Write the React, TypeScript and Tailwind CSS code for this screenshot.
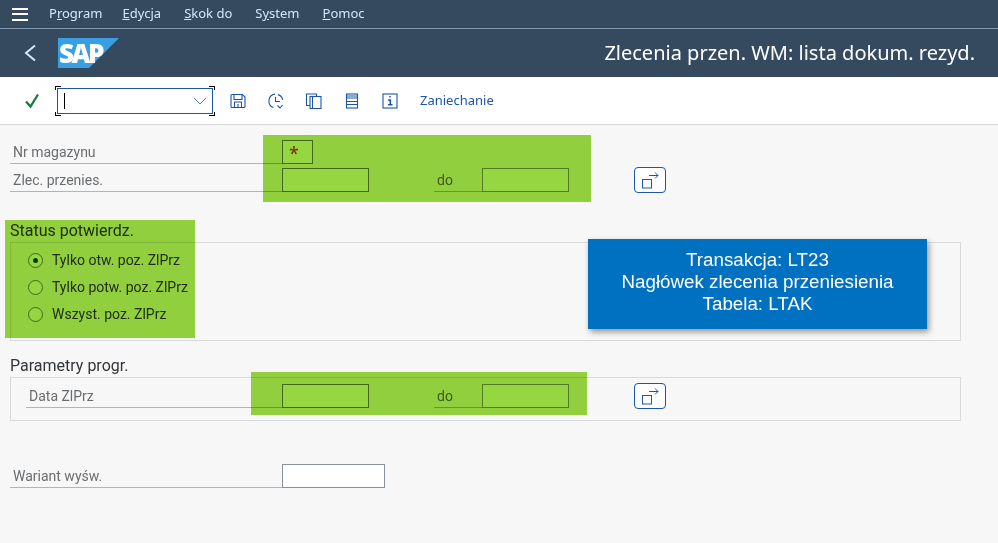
const sans = "font-['Noto_Sans',sans-serif]";
const form = "font-['Roboto',sans-serif]";

function Underlined({ first, rest, pre = "", className = "" }: { first: string; rest: string; pre?: string; className?: string }) {
  return (
    <span className={`text-[13px] text-[#d1e8ff] ${className}`}>
      {pre}
      <span className="underline">{first}</span>
      {rest}
    </span>
  );
}

function Input({ w = "w-[87px]", green, children }: { w?: string; green?: boolean; children?: React.ReactNode }) {
  return (
    <div className={`h-6 ${w} shrink-0 bg-white border ${green ? "border-[#6e7a80]" : "border-[#89919a]"} flex items-center pl-1.5`}>
      {children}
    </div>
  );
}

function Label({ text, w = "w-[272px]", pl = "pl-[3px]" }: { text: string; w?: string; pl?: string }) {
  return (
    <div className={`h-6 ${w} ${pl} shrink-0 border-b border-[#b4b4b4] text-[14px] leading-[24px] text-[#6a6d70] ${form}`}>{text}</div>
  );
}

function MultiButton() {
  return (
    <button className="ml-[65px] w-8 h-[26px] shrink-0 rounded-[4px] border border-[#1b56a5] bg-white flex items-center justify-center">
      <svg width="22" height="18" viewBox="0 0 22 18" fill="none" stroke="#1b56a5" strokeWidth="1">
        <rect x="3.500" y="8.500" width="9" height="8.500" />
        <path d="M10 4.500h9M16 1.500l3 3-3 3" />
      </svg>
    </button>
  );
}

function RangeTail() {
  return (
    <>
      <div className="ml-[65px]">
        <Label text="do" w="w-12" />
      </div>
      <Input />
      <MultiButton />
    </>
  );
}

function Radio({ text, on }: { text: string; on?: boolean }) {
  return (
    <div className="h-[27px] flex items-center pl-[17px] gap-[9px]">
      <span className="w-[15px] h-[15px] rounded-full border border-[#6a7d70] bg-white flex items-center justify-center">
        {on && <span className="w-[5px] h-[5px] rounded-full bg-[#0a4a50]" />}
      </span>
      <span className={`text-[14px] text-[#32363a] ${form}`}>{text}</span>
    </div>
  );
}

function Tool({ children }: { children: React.ReactNode }) {
  return <div className="w-[38px] flex justify-center">{children}</div>;
}

const ic = { width: 18, height: 18, viewBox: "0 0 18 18", fill: "none", stroke: "#1b56a5", strokeWidth: 1.1 };

export default function App() {
  return (
    <div className={`relative w-[998px] h-[543px] overflow-hidden bg-[#f7f7f7] ${sans}`}>
      {/* menu bar */}
      <div className="h-[29px] bg-[#354a5f] border-b border-[#7f93ab] flex items-center">
        <div className="w-[49px] pl-3">
          <div className="w-4 h-[13px] flex flex-col justify-between">
            <span className="h-0.5 bg-white" />
            <span className="h-0.5 bg-white" />
            <span className="h-0.5 bg-white" />
          </div>
        </div>
        <div className="flex items-center">
          <Underlined pre="P" first="r" rest="ogram" />
          <Underlined first="E" rest="dycja" className="ml-5" />
          <Underlined first="S" rest="kok do" className="ml-[23px]" />
          <Underlined pre="S" first="y" rest="stem" className="ml-[23px]" />
          <Underlined first="P" rest="omoc" className="ml-[23px]" />
        </div>
      </div>

      {/* title bar */}
      <div className="h-12 bg-[#354a5f] flex items-center pl-4 pr-[23px]">
        <svg width="30" height="30" viewBox="0 0 30 30" fill="none" stroke="#d1e8ff" strokeWidth="2">
          <path d="M19 7.500l-9 7.500 9 7.500" />
        </svg>
        <svg className="ml-3 overflow-visible" width="62" height="30" viewBox="0 0 62 30">
          <polygon points="0,0 61,0 31,30 0,30" fill="#38a0e2" />
          <text x="1" y="25" fontSize="26" fontWeight="800" fill="#fff" fontFamily="'Open Sans',sans-serif" letterSpacing="-2.5">SAP</text>
        </svg>
        <div className="ml-auto text-[20px] text-white">Zlecenia przen. WM: lista dokum. rezyd.</div>
      </div>

      {/* toolbar */}
      <div className="h-12 bg-white border-b border-[#d9d9d9] flex items-center pl-6">
        <svg width="16" height="16" viewBox="0 0 16 16" fill="none" stroke="#1e7b3a" strokeWidth="2.300">
          <path d="M2 8.500l4.500 5 7.500-12" />
        </svg>
        <div className="relative ml-[17px] w-[156px] h-[26px] border border-[#1b56a5] bg-white flex items-center justify-between pl-1.5 pr-[5px]">
          <span className="w-px h-4 bg-black" />
          <svg width="14" height="8" viewBox="0 0 14 8" fill="none" stroke="#4f7fc0" strokeWidth="1">
            <path d="M1 1l6 6 6-6" />
          </svg>
          <span className="absolute -left-[3px] -top-[3px] w-[6px] h-1 border-l border-t border-black" />
          <span className="absolute -right-[3px] -top-[3px] w-[6px] h-1 border-r border-t border-black" />
          <span className="absolute -left-[3px] -bottom-[3px] w-[6px] h-1 border-l border-b border-black" />
          <span className="absolute -right-[3px] -bottom-[3px] w-[6px] h-1 border-r border-b border-black" />
        </div>
        <div className="ml-1.5 flex items-center">
          <Tool>
            <svg {...ic}>
              <path d="M2 3.500q0-1 1-1h10.500l2.500 2.500v9.500q0 1-1 1h-12q-1 0-1-1z" />
              <path d="M5 2.500v5h8v-5M5.500 15.500v-5.500h7v5.500M9 12v3.500" />
            </svg>
          </Tool>
          <Tool>
            <svg {...ic}>
              <path d="M8 2.100a7 7 0 0 0-1.500 13.500" />
              <path d="M11 2.600a7 7 0 0 1 4.800 5.200M8.500 5v4.500h4.500M10.500 13.500l2.500 2.500 2.500-3" />
            </svg>
          </Tool>
          <Tool>
            <svg {...ic}>
              <path d="M11.500 4.500v-2.500h-10v11.500h3.500" />
              <rect x="5" y="4.500" width="11" height="12" />
              <path d="M7.500 4.500v12" />
            </svg>
          </Tool>
          <Tool>
            <svg {...ic}>
              <rect x="3.500" y="2" width="11" height="14" />
              <path d="M3.500 4h11M3.500 6h11M3.500 9.500h11M3.500 12.500h11" />
            </svg>
          </Tool>
          <Tool>
            <svg {...ic}>
              <rect x="2" y="2" width="14" height="14" />
              <path d="M7 8h2.300v4.500M7 12.800h4.500M8.300 4.800h1.500" strokeWidth="1.600" />
            </svg>
          </Tool>
        </div>
        <span className="ml-[11px] pt-px text-[13px] text-[#1b56a5]">Zaniechanie</span>
      </div>

      {/* form */}
      <div className="pt-[15px] pl-2.5">
        <div className="flex items-center">
          <Label text="Nr magazynu" />
          <Input w="w-[31px]" green>
            <span className="text-[18px] leading-none pt-0.5 text-[#c03000]">*</span>
          </Input>
        </div>
        <div className="flex items-center mt-[3px]">
          <Label text="Zlec. przenies." />
          <Input green />
          <RangeTail />
        </div>

        <div className="mt-[29px]">
          <div className={`h-5 text-[16px] leading-[18px] text-[#32363a] ${form}`}>Status potwierdz.</div>
          <div className="w-[951px] h-[99px] border border-[#d9d9d9] pt-1">
            <Radio text="Tylko otw. poz. ZlPrz" on />
            <Radio text="Tylko potw. poz. ZlPrz" />
            <Radio text="Wszyst. poz. ZlPrz" />
          </div>
        </div>

        <div className="mt-[15px]">
          <div className={`h-[21px] text-[16px] leading-5 text-[#32363a] ${form}`}>Parametry progr.</div>
          <div className="w-[951px] h-[44px] border border-[#d9d9d9] pt-[5px] pl-[15px] flex items-start">
            <div className="flex items-center">
              <Label text="Data ZlPrz" w="w-[256px]" pl="pl-[3px]" />
              <Input green />
              <RangeTail />
            </div>
          </div>
        </div>

        <div className="flex items-center mt-[43px]">
          <Label text="Wariant wyśw." />
          <Input w="w-[103px]" />
        </div>
      </div>

      {/* highlights laid over the screen */}
      <div className="absolute left-[263px] top-[135px] w-[328px] h-[67px] bg-[#96d640] mix-blend-multiply" />
      <div className="absolute left-[5px] top-[220px] w-[190px] h-[118px] bg-[#96d640] mix-blend-multiply" />
      <div className="absolute left-[251px] top-[372px] w-[336px] h-[43px] bg-[#96d640] mix-blend-multiply" />

      {/* callout */}
      <div className="absolute left-[588px] top-[239px] w-[339px] h-[90px] bg-[#0070c0] shadow-[2px_3px_6px_rgba(0,0,0,0.4)] flex flex-col justify-center pb-1 text-center text-white text-[18.750px] leading-[22px] font-['Liberation_Sans',sans-serif]">
        <div>Transakcja: LT23</div>
        <div>Nagłówek zlecenia przeniesienia</div>
        <div>Tabela: LTAK</div>
      </div>
    </div>
  );
}
